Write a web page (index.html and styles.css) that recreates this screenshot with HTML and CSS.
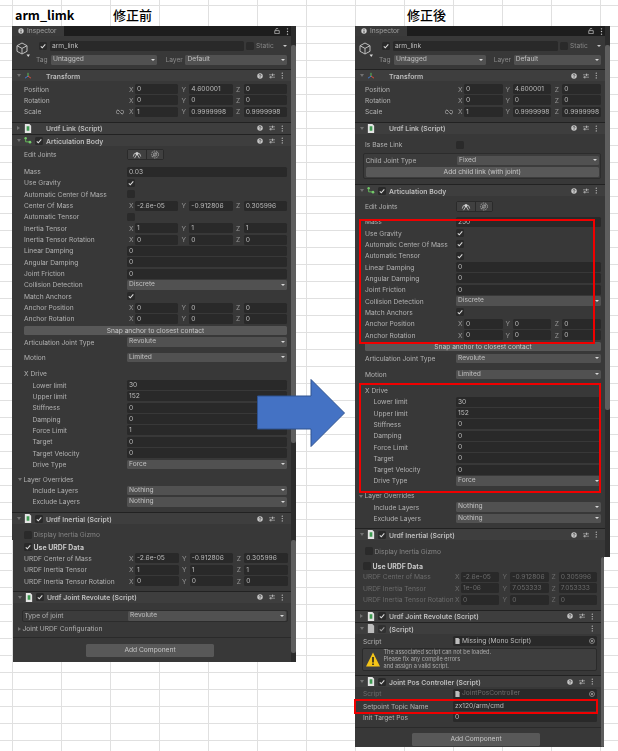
FILE: index.html
```html
<!DOCTYPE html>
<html lang="en">

<head>
    <meta charset="UTF-8">
    <meta name="viewport" content="width=device-width, initial-scale=1.0">
    <title>arm_link inspector</title>
    <link rel="stylesheet" href="styles.css">
</head>

<body>
    <svg class="defs" aria-hidden="true">
        <symbol id="i-help" viewBox="0 0 10 10"><circle cx="5" cy="5" r="4.6" fill="#c8c8c8"/><path d="M3.5 4c0-2 3-2 3 0 0 1-1.500 1-1.500 2.200M5 7.200v1" fill="none" stroke="#333" stroke-width="1.300"/></symbol>
        <symbol id="i-sliders" viewBox="0 0 10 10"><path d="M0 3h10M0 7h10" stroke="#bdbdbd"/><path d="M6 1v4M3 5v4" stroke="#bdbdbd" stroke-width="1.500"/></symbol>
        <symbol id="i-kebab" viewBox="0 0 4 10"><circle cx="2" cy="1.200" r="1" fill="#c8c8c8"/><circle cx="2" cy="5" r="1" fill="#c8c8c8"/><circle cx="2" cy="8.800" r="1" fill="#c8c8c8"/></symbol>
        <symbol id="i-check" viewBox="0 0 8 8"><path d="M1.800 4.300l1.500 1.500 3-3.400" fill="none" stroke="#dcdcdc" stroke-width="1.100"/></symbol>
        <symbol id="i-script" viewBox="0 0 8 10"><path d="M0.500 0h5l2 2v8h-7z" fill="#e4e4e4"/><path d="M2.500 2.500h3v5h-3z" fill="#3f9b52"/></symbol>
        <symbol id="i-doc" viewBox="0 0 8 10"><path d="M0.500 0h5l2 2v8h-7z" fill="#bdbdbd"/></symbol>
        <symbol id="i-transform" viewBox="0 0 12 10"><path d="M6 1v5" stroke="#5cc45a" stroke-width="1.400"/><path d="M6 6L1.500 9" stroke="#3f7fd8" stroke-width="1.400"/><path d="M6 6l4.500 3" stroke="#e0503c" stroke-width="1.400"/></symbol>
        <symbol id="i-joint" viewBox="0 0 12 11"><path d="M2.500 2v5.500h6" fill="none" stroke="#63b65a" stroke-width="1.500"/><circle cx="2.500" cy="2" r="1.800" fill="#74c96a"/><circle cx="9" cy="8" r="2" fill="#74c96a"/></symbol>
        <symbol id="i-cube" viewBox="0 0 14 15"><path d="M6 1l5 2.700v5.600L6 12 1 9.300V3.700zM1 3.700L6 6.400l5-2.700M6 6.400V12" fill="none" stroke="#bdbdbd"/><path d="M10.500 12.500h3.500l-1.750 2.500z" fill="#d8d8d8"/></symbol>
        <symbol id="i-lock" viewBox="0 0 8 8"><path d="M1 3.500h6v4H1zM2.500 3.500V1.500c0-1.300 3-1.300 3 0" fill="none" stroke="#bdbdbd"/></symbol>
        <symbol id="i-info" viewBox="0 0 8 8"><circle cx="4" cy="4" r="3.600" fill="#d0d0d0"/><path d="M4 3.400v3M4 1.600v1" stroke="#222" stroke-width="1.100"/></symbol>
        <symbol id="i-link" viewBox="0 0 10 7"><path d="M4 1.500H2.200a2 2 0 000 4H4M6 1.500h1.800a2 2 0 010 4H6M2 .5l6 6" fill="none" stroke="#a8a8a8" stroke-width=".9"/></symbol>
        <symbol id="i-edit-a" viewBox="0 0 12 11"><path d="M1.500 8a4.500 4.500 0 019 0" fill="none" stroke="#d0d0d0"/><circle cx="6" cy="4.500" r="1.800" fill="#d0d0d0"/><path d="M6 5L3 10M6 5l3 5" stroke="#d0d0d0"/></symbol>
        <symbol id="i-edit-b" viewBox="0 0 11 11"><circle cx="5.500" cy="5.500" r="4.300" fill="none" stroke="#aaa" stroke-dasharray="2 1"/><circle cx="5.500" cy="5.500" r="2" fill="none" stroke="#aaa"/><path d="M2.500 8.500l6-6" stroke="#aaa"/></symbol>
        <symbol id="i-target" viewBox="0 0 8 8"><circle cx="4" cy="4" r="3.300" fill="none" stroke="#a0a0a0"/><circle cx="4" cy="4" r="1.400" fill="#a0a0a0"/></symbol>
        <symbol id="i-warn" viewBox="0 0 14 15"><path d="M7 .5L14 14.500H0z" fill="#f5c518"/><path d="M7 5v5.500M7 11.500v1.500" stroke="#222" stroke-width="1.600"/></symbol>
    </svg>

    <header class="title-row">
        <span class="title">arm_limk</span>
        <span class="title-jp">修正前</span>
        <span class="title-jp">修正後</span>
    </header>
    <div class="sheet"></div>

    <!-- before -->
    <section class="window before">
        <div class="shot shot-a">
            <div class="content">
                <div class="tabs">
                    <div class="tab"><svg class="ic8"><use href="#i-info"/></svg>Inspector</div>
                    <svg class="ic8 lock"><use href="#i-lock"/></svg>
                    <svg class="kebab"><use href="#i-kebab"/></svg>
                </div>
                <div class="go">
                    <svg class="cube"><use href="#i-cube"/></svg>
                    <div class="go-col">
                        <div class="go-row">
                            <span class="check"><svg><use href="#i-check"/></svg></span>
                            <span class="field name">arm_link</span>
                            <span class="check empty"></span>
                            <span class="static">Static</span>
                            <span class="caret"></span>
                        </div>
                        <div class="go-row second">
                            <span class="tag-label">Tag</span>
                            <span class="select tag-sel">Untagged</span>
                            <span class="layer-label">Layer</span>
                            <span class="select layer-sel">Default</span>
                        </div>
                    </div>
                </div>

                <div class="head">
                    <span class="fold"></span><svg class="ic-head"><use href="#i-transform"/></svg><span class="no-check"></span>
                    <span class="head-title">Transform</span>
                    <span class="tools"><svg><use href="#i-help"/></svg><svg><use href="#i-sliders"/></svg><svg class="k"><use href="#i-kebab"/></svg></span>
                </div>
                <div class="row mt-2h"><span class="label">Position</span><div class="vec"><span class="axis">X</span><span class="field">0</span><span class="axis">Y</span><span class="field">4.600001</span><span class="axis">Z</span><span class="field">0</span></div></div>
                <div class="row"><span class="label">Rotation</span><div class="vec"><span class="axis">X</span><span class="field">0</span><span class="axis">Y</span><span class="field">0</span><span class="axis">Z</span><span class="field">0</span></div></div>
                <div class="row"><span class="label">Scale<svg class="link"><use href="#i-link"/></svg></span><div class="vec"><span class="axis">X</span><span class="field">1</span><span class="axis">Y</span><span class="field">0.9999998</span><span class="axis">Z</span><span class="field">0.9999998</span></div></div>

                <div class="head mt-4h">
                    <span class="fold closed"></span><svg class="ic-head"><use href="#i-script"/></svg><span class="no-check"></span>
                    <span class="head-title">Urdf Link (Script)</span>
                    <span class="tools"><svg><use href="#i-help"/></svg><svg><use href="#i-sliders"/></svg><svg class="k"><use href="#i-kebab"/></svg></span>
                </div>
                <div class="head mt-h">
                    <span class="fold"></span><svg class="ic-head"><use href="#i-joint"/></svg><span class="check"><svg><use href="#i-check"/></svg></span>
                    <span class="head-title">Articulation Body</span>
                    <span class="tools"><svg><use href="#i-help"/></svg><svg><use href="#i-sliders"/></svg><svg class="k"><use href="#i-kebab"/></svg></span>
                </div>
                <div class="row tall mt-2h"><span class="label">Edit Joints</span><span class="edit"><span><svg><use href="#i-edit-a"/></svg></span><span><svg><use href="#i-edit-b"/></svg></span></span></div>
                <div class="row mt-5"><span class="label">Mass</span><span class="field wide">0.03</span></div>
                <div class="row"><span class="label">Use Gravity</span><span class="check"><svg><use href="#i-check"/></svg></span></div>
                <div class="row"><span class="label">Automatic Center Of Mass</span><span class="check empty"></span></div>
                <div class="row"><span class="label">Center Of Mass</span><div class="vec"><span class="axis">X</span><span class="field">-2.6e-05</span><span class="axis">Y</span><span class="field">-0.912806</span><span class="axis">Z</span><span class="field">0.305996</span></div></div>
                <div class="row"><span class="label">Automatic Tensor</span><span class="check empty"></span></div>
                <div class="row"><span class="label">Inertia Tensor</span><div class="vec"><span class="axis">X</span><span class="field">1</span><span class="axis">Y</span><span class="field">1</span><span class="axis">Z</span><span class="field">1</span></div></div>
                <div class="row"><span class="label">Inertia Tensor Rotation</span><div class="vec"><span class="axis">X</span><span class="field">0</span><span class="axis">Y</span><span class="field">0</span><span class="axis">Z</span><span class="field">0</span></div></div>
                <div class="row"><span class="label">Linear Damping</span><span class="field wide">0</span></div>
                <div class="row"><span class="label">Angular Damping</span><span class="field wide">0</span></div>
                <div class="row"><span class="label">Joint Friction</span><span class="field wide">0</span></div>
                <div class="row"><span class="label">Collision Detection</span><span class="select wide">Discrete</span></div>
                <div class="row"><span class="label">Match Anchors</span><span class="check"><svg><use href="#i-check"/></svg></span></div>
                <div class="row"><span class="label">Anchor Position</span><div class="vec"><span class="axis">X</span><span class="field">0</span><span class="axis">Y</span><span class="field">0</span><span class="axis">Z</span><span class="field">0</span></div></div>
                <div class="row"><span class="label">Anchor Rotation</span><div class="vec"><span class="axis">X</span><span class="field">0</span><span class="axis">Y</span><span class="field">0</span><span class="axis">Z</span><span class="field">0</span></div></div>
                <div class="row mt-h"><span class="btn">Snap anchor to closest contact</span></div>
                <div class="row"><span class="label">Articulation Joint Type</span><span class="select wide">Revolute</span></div>
                <div class="row mt-4"><span class="label">Motion</span><span class="select wide">Limited</span></div>
                <div class="row mt-5"><span class="label">X Drive</span></div>
                <div class="row sub"><span class="label">Lower limit</span><span class="field wide">30</span></div>
                <div class="row sub"><span class="label">Upper limit</span><span class="field wide">152</span></div>
                <div class="row sub"><span class="label">Stiffness</span><span class="field wide">0</span></div>
                <div class="row sub"><span class="label">Damping</span><span class="field wide">0</span></div>
                <div class="row sub"><span class="label">Force Limit</span><span class="field wide">1</span></div>
                <div class="row sub"><span class="label">Target</span><span class="field wide">0</span></div>
                <div class="row sub"><span class="label">Target Velocity</span><span class="field wide">0</span></div>
                <div class="row sub"><span class="label">Drive Type</span><span class="select wide">Force</span></div>
                <div class="row mt-3h"><span class="label foldout"><span class="fold"></span>Layer Overrides</span></div>
                <div class="row sub"><span class="label">Include Layers</span><span class="select wide">Nothing</span></div>
                <div class="row sub"><span class="label">Exclude Layers</span><span class="select wide">Nothing</span></div>

                <div class="head mt-4h">
                    <span class="fold"></span><svg class="ic-head"><use href="#i-script"/></svg><span class="check"><svg><use href="#i-check"/></svg></span>
                    <span class="head-title">Urdf Inertial (Script)</span>
                    <span class="tools"><svg><use href="#i-help"/></svg><svg><use href="#i-sliders"/></svg><svg class="k"><use href="#i-kebab"/></svg></span>
                </div>
                <div class="row mt-5"><span class="check empty lead"></span><span class="toggle-text dim">Display Inertia Gizmo</span></div>
            </div>
            <div class="scrollbar"><span class="thumb"></span></div>
        </div>

        <div class="shot shot-b">
            <div class="content">
                <div class="row mt-1h"><span class="check lead"><svg><use href="#i-check"/></svg></span><span class="toggle-text strong">Use URDF Data</span></div>
                <div class="row"><span class="label">URDF Center of Mass</span><div class="vec"><span class="axis">X</span><span class="field">-2.6e-05</span><span class="axis">Y</span><span class="field">-0.912806</span><span class="axis">Z</span><span class="field">0.305996</span></div></div>
                <div class="row"><span class="label">URDF Inertia Tensor</span><div class="vec"><span class="axis">X</span><span class="field">1</span><span class="axis">Y</span><span class="field">1</span><span class="axis">Z</span><span class="field">1</span></div></div>
                <div class="row"><span class="label">URDF Inertia Tensor Rotation</span><div class="vec"><span class="axis">X</span><span class="field">0</span><span class="axis">Y</span><span class="field">0</span><span class="axis">Z</span><span class="field">0</span></div></div>
                <div class="head mt-4">
                    <span class="fold"></span><svg class="ic-head"><use href="#i-script"/></svg><span class="check"><svg><use href="#i-check"/></svg></span>
                    <span class="head-title">Urdf Joint Revolute (Script)</span>
                    <span class="tools"><svg><use href="#i-help"/></svg><svg><use href="#i-sliders"/></svg><svg class="k"><use href="#i-kebab"/></svg></span>
                </div>
                <div class="group mt-7">
                    <div class="row"><span class="label">Type of joint</span><span class="select wide">Revolute</span></div>
                </div>
                <div class="row mt-1h"><span class="label foldout"><span class="fold closed"></span>Joint URDF Configuration</span></div>
                <div class="sep mt-2h"></div>
                <div class="add mt-6"><span class="add-btn">Add Component</span></div>
            </div>
            <div class="scrollbar"><span class="thumb"></span></div>
        </div>
    </section>

    <!-- after -->
    <section class="window after">
        <div class="shot shot-a">
            <div class="content">
                <div class="tabs">
                    <div class="tab"><svg class="ic8"><use href="#i-info"/></svg>Inspector</div>
                    <svg class="ic8 lock"><use href="#i-lock"/></svg>
                    <svg class="kebab"><use href="#i-kebab"/></svg>
                </div>
                <div class="go">
                    <svg class="cube"><use href="#i-cube"/></svg>
                    <div class="go-col">
                        <div class="go-row">
                            <span class="check"><svg><use href="#i-check"/></svg></span>
                            <span class="field name">arm_link</span>
                            <span class="check empty"></span>
                            <span class="static">Static</span>
                            <span class="caret"></span>
                        </div>
                        <div class="go-row second">
                            <span class="tag-label">Tag</span>
                            <span class="select tag-sel">Untagged</span>
                            <span class="layer-label">Layer</span>
                            <span class="select layer-sel">Default</span>
                        </div>
                    </div>
                </div>

                <div class="head">
                    <span class="fold"></span><svg class="ic-head"><use href="#i-transform"/></svg><span class="no-check"></span>
                    <span class="head-title">Transform</span>
                    <span class="tools"><svg><use href="#i-help"/></svg><svg><use href="#i-sliders"/></svg><svg class="k"><use href="#i-kebab"/></svg></span>
                </div>
                <div class="row mt-2h"><span class="label">Position</span><div class="vec"><span class="axis">X</span><span class="field">0</span><span class="axis">Y</span><span class="field">4.600001</span><span class="axis">Z</span><span class="field">0</span></div></div>
                <div class="row"><span class="label">Rotation</span><div class="vec"><span class="axis">X</span><span class="field">0</span><span class="axis">Y</span><span class="field">0</span><span class="axis">Z</span><span class="field">0</span></div></div>
                <div class="row"><span class="label">Scale<svg class="link"><use href="#i-link"/></svg></span><div class="vec"><span class="axis">X</span><span class="field">1</span><span class="axis">Y</span><span class="field">0.9999998</span><span class="axis">Z</span><span class="field">0.9999998</span></div></div>

                <div class="head mt-4h">
                    <span class="fold"></span><svg class="ic-head"><use href="#i-script"/></svg><span class="no-check"></span>
                    <span class="head-title">Urdf Link (Script)</span>
                    <span class="tools"><svg><use href="#i-help"/></svg><svg><use href="#i-sliders"/></svg><svg class="k"><use href="#i-kebab"/></svg></span>
                </div>
                <div class="row mt-5"><span class="label">Is Base Link</span><span class="check empty"></span></div>
                <div class="group link-group mt-3">
                    <div class="row"><span class="label">Child Joint Type</span><span class="select wide">Fixed</span></div>
                    <div class="row"><span class="btn">Add child link (with joint)</span></div>
                </div>
                <div class="head mt-5h">
                    <span class="fold"></span><svg class="ic-head"><use href="#i-joint"/></svg><span class="check"><svg><use href="#i-check"/></svg></span>
                    <span class="head-title">Articulation Body</span>
                    <span class="tools"><svg><use href="#i-help"/></svg><svg><use href="#i-sliders"/></svg><svg class="k"><use href="#i-kebab"/></svg></span>
                </div>
                <div class="row tall mt-4"><span class="label">Edit Joints</span><span class="edit"><span><svg><use href="#i-edit-a"/></svg></span><span><svg><use href="#i-edit-b"/></svg></span></span></div>
                <div class="row mt-4"><span class="label">Mass</span><span class="field wide">250</span></div>
                <div class="row"><span class="label">Use Gravity</span><span class="check"><svg><use href="#i-check"/></svg></span></div>
                <div class="row"><span class="label">Automatic Center Of Mass</span><span class="check"><svg><use href="#i-check"/></svg></span></div>
                <div class="row"><span class="label">Automatic Tensor</span><span class="check"><svg><use href="#i-check"/></svg></span></div>
                <div class="row"><span class="label">Linear Damping</span><span class="field wide">0</span></div>
                <div class="row"><span class="label">Angular Damping</span><span class="field wide">0</span></div>
                <div class="row"><span class="label">Joint Friction</span><span class="field wide">0</span></div>
                <div class="row"><span class="label">Collision Detection</span><span class="select wide">Discrete</span></div>
                <div class="row"><span class="label">Match Anchors</span><span class="check"><svg><use href="#i-check"/></svg></span></div>
                <div class="row"><span class="label">Anchor Position</span><div class="vec"><span class="axis">X</span><span class="field">0</span><span class="axis">Y</span><span class="field">0</span><span class="axis">Z</span><span class="field">0</span></div></div>
                <div class="row"><span class="label">Anchor Rotation</span><div class="vec"><span class="axis">X</span><span class="field">0</span><span class="axis">Y</span><span class="field">0</span><span class="axis">Z</span><span class="field">0</span></div></div>
                <div class="row"><span class="btn">Snap anchor to closest contact</span></div>
                <div class="row mt-1"><span class="label">Articulation Joint Type</span><span class="select wide">Revolute</span></div>
                <div class="row mt-4h"><span class="label">Motion</span><span class="select wide">Limited</span></div>
                <div class="row mt-4h"><span class="label">X Drive</span></div>
                <div class="row sub"><span class="label">Lower limit</span><span class="field wide">30</span></div>
                <div class="row sub"><span class="label">Upper limit</span><span class="field wide">152</span></div>
                <div class="row sub"><span class="label">Stiffness</span><span class="field wide">0</span></div>
                <div class="row sub"><span class="label">Damping</span><span class="field wide">0</span></div>
                <div class="row sub"><span class="label">Force Limit</span><span class="field wide">0</span></div>
                <div class="row sub"><span class="label">Target</span><span class="field wide">0</span></div>
                <div class="row sub"><span class="label">Target Velocity</span><span class="field wide">0</span></div>
                <div class="row sub"><span class="label">Drive Type</span><span class="select wide">Force</span></div>
                <div class="row mt-3h"><span class="label foldout"><span class="fold"></span>Layer Overrides</span></div>
                <div class="row sub"><span class="label">Include Layers</span><span class="select wide">Nothing</span></div>
                <div class="row sub"><span class="label">Exclude Layers</span><span class="select wide">Nothing</span></div>

                <div class="head mt-4">
                    <span class="fold"></span><svg class="ic-head"><use href="#i-script"/></svg><span class="check"><svg><use href="#i-check"/></svg></span>
                    <span class="head-title">Urdf Inertial (Script)</span>
                    <span class="tools"><svg><use href="#i-help"/></svg><svg><use href="#i-sliders"/></svg><svg class="k"><use href="#i-kebab"/></svg></span>
                </div>
                <div class="row mt-5h"><span class="check empty lead"></span><span class="toggle-text dim">Display Inertia Gizmo</span></div>
            </div>
            <div class="scrollbar"><span class="thumb"></span></div>
        </div>

        <div class="shot shot-b">
            <div class="content">
                <div class="row mt-3"><span class="check empty lead"></span><span class="toggle-text strong">Use URDF Data</span></div>
                <div class="row off"><span class="label">URDF Center of Mass</span><div class="vec"><span class="axis">X</span><span class="field">-2.6e-05</span><span class="axis">Y</span><span class="field">-0.912806</span><span class="axis">Z</span><span class="field">0.305996</span></div></div>
                <div class="row off"><span class="label">URDF Inertia Tensor</span><div class="vec"><span class="axis">X</span><span class="field">1e-06</span><span class="axis">Y</span><span class="field">7.053333</span><span class="axis">Z</span><span class="field">7.053333</span></div></div>
                <div class="row off"><span class="label">URDF Inertia Tensor Rotation</span><div class="vec"><span class="axis">X</span><span class="field">0</span><span class="axis">Y</span><span class="field">0</span><span class="axis">Z</span><span class="field">0</span></div></div>
                <div class="head mt-4h">
                    <span class="fold closed"></span><svg class="ic-head"><use href="#i-script"/></svg><span class="check"><svg><use href="#i-check"/></svg></span>
                    <span class="head-title">Urdf Joint Revolute (Script)</span>
                    <span class="tools"><svg><use href="#i-help"/></svg><svg><use href="#i-sliders"/></svg><svg class="k"><use href="#i-kebab"/></svg></span>
                </div>
                <div class="head mt-h">
                    <span class="fold"></span><svg class="ic-head"><use href="#i-doc"/></svg><span class="check faded"><svg><use href="#i-check"/></svg></span>
                    <span class="head-title">(Script)</span>
                    <span class="tools"><svg class="k"><use href="#i-kebab"/></svg></span>
                </div>
                <div class="row mt-1h"><span class="label">Script</span><span class="field wide objfield"><svg><use href="#i-doc"/></svg>Missing (Mono Script)<svg class="target"><use href="#i-target"/></svg></span></div>
                <div class="warn mt-h">
                    <svg><use href="#i-warn"/></svg>
                    <p>The associated script can not be loaded.<br>Please fix any compile errors<br>and assign a valid script.</p>
                </div>
                <div class="head mt-4h">
                    <span class="fold"></span><svg class="ic-head"><use href="#i-script"/></svg><span class="check"><svg><use href="#i-check"/></svg></span>
                    <span class="head-title">Joint Pos Controller (Script)</span>
                    <span class="tools"><svg><use href="#i-help"/></svg><svg><use href="#i-sliders"/></svg><svg class="k"><use href="#i-kebab"/></svg></span>
                </div>
                <div class="row off mt-1"><span class="label">Script</span><span class="field wide objfield"><svg><use href="#i-doc"/></svg>JointPosController<svg class="target"><use href="#i-target"/></svg></span></div>
                <div class="row mt-1"><span class="label">Setpoint Topic Name</span><span class="field wide">zx120/arm/cmd</span></div>
                <div class="row"><span class="label">Init Target Pos</span><span class="field wide">0</span></div>
                <div class="sep mt-4"></div>
                <div class="add mt-5"><span class="add-btn">Add Component</span></div>
            </div>
            <div class="scrollbar"><span class="thumb"></span></div>
        </div>
    </section>

    <svg class="arrow" viewBox="0 0 88 68" aria-hidden="true">
        <polygon points="0.500,17 54,17 54,0.500 87.500,34 54,67.500 54,50 0.500,50" fill="#4472c4" stroke="#2f528f"/>
    </svg>
    <div class="mark mark-a"></div>
    <div class="mark mark-b"></div>
    <div class="mark mark-c"></div>
</body>

</html>
```

FILE: styles.css
```css
html,
body {
    padding: 0;
    margin: 0;
}

* {
    box-sizing: border-box;
}

body {
    position: relative;
    width: 618px;
    height: 751px;
    overflow: hidden;
    background-color: white;
    font-family: Inter, "Liberation Sans", sans-serif;
}

.defs {
    position: absolute;
    width: 0;
    height: 0;
}

/* spreadsheet behind the windows */
.title-row {
    display: grid;
    grid-template-columns: 98px 294px auto;
    align-items: center;
    height: 26px;
    padding: 4px 0 1px 15px;
    color: black;
    background:
        linear-gradient(#e0e0e0, #e0e0e0) 0 5px / 100% 1px no-repeat,
        linear-gradient(90deg, #e0e0e0 1px, transparent 1px) 12px 0 / 49px 100%;
}

.title {
    font-family: "Noto Sans CJK JP", sans-serif;
    font-size: 12.5px;
    font-weight: 700;
}

.title-jp {
    font-family: "Noto Sans CJK JP", sans-serif;
    font-size: 13px;
    font-weight: 500;
}

.sheet {
    height: 725px;
    background:
        linear-gradient(#e0e0e0 1px, transparent 1px) 0 0 / 100% 17px,
        linear-gradient(90deg, #e0e0e0 1px, transparent 1px) 12px 0 / 49px 100%;
}

/* inspector windows */
.window {
    position: absolute;
    top: 26px;
    display: flex;
    flex-direction: column;
    align-items: flex-start;
    color: #b2b2b2;
    font-size: 6.65px;
    filter: blur(0.4px);
}

.before {
    left: 12px;
    --label: 103px;
    --pad-l: 12px;
    --pad-r: 4px;
    --cols: 8px 1fr 11px 1fr 11px 1fr;
}

.before .shot-a {
    width: 284px;
    height: 514px;
}

.before .shot-b {
    width: 283px;
    height: 122px;
    margin-left: 1px;
    --pad-l: 11px;
    --pad-r: 3px;
}

.after {
    left: 355px;
    --label: 91px;
    --pad-l: 10px;
    --pad-r: 4px;
    --cols: 8px 1fr 10px 1fr 11px 1fr;
}

.after .shot-a {
    width: 255px;
    height: 531px;
}

.after .shot-b {
    width: 249px;
    height: 190px;
    --pad-l: 8px;
    --label: 90px;
    --pad-r: 4px;
    --cols: 8px 1fr 11px 1fr 10px 1fr;
}

.shot {
    display: flex;
    overflow: hidden;
    background-color: #383838;
}

.content {
    flex: 1;
    min-width: 0;
}

.scrollbar {
    flex: none;
    width: 5px;
    background-color: #2c2c2c;
    padding-top: 19px;
}

.thumb {
    display: block;
    width: 100%;
    background-color: #5e5e5e;
    border-radius: 2px;
}

.before .shot-a .thumb {
    height: 398px;
}

.after .shot-a .thumb {
    height: 365px;
}

.shot-b .scrollbar {
    padding-top: 0;
}

.before .shot-b .thumb {
    height: 113px;
}

.after .shot-b .scrollbar {
    width: 3px;
}

.after .shot-b .thumb {
    height: 190px;
}

.tabs {
    display: flex;
    align-items: center;
    height: 10px;
    background-color: #1d1d1d;
    padding-right: 2px;
}

.tab {
    display: flex;
    align-items: center;
    gap: 3px;
    width: 52px;
    height: 100%;
    padding-left: 6px;
    background-color: #3a3a3a;
    color: #a0a0a0;
}

.ic8 {
    width: 6px;
    height: 6px;
}

.lock {
    margin-left: auto;
}

.kebab {
    width: 3px;
    height: 7px;
    margin-left: 6px;
}

.go {
    display: flex;
    height: 33px;
    padding: 5px var(--pad-r) 0 4px;
}

.cube {
    flex: none;
    width: 14px;
    height: 15px;
    margin-top: 1px;
}

.go-col {
    flex: 1;
    min-width: 0;
    padding-left: 9px;
}

.go-row {
    display: flex;
    align-items: center;
    height: 10px;
}

.second {
    margin-top: 4px;
}

.name {
    flex: 1;
    margin: 0 2px 0 3px;
    padding-left: 2px;
}

.static {
    width: 29px;
    padding-left: 2px;
    color: #858585;
}

.caret {
    position: relative;
    width: 4px;
}

.caret::after {
    content: "";
    position: absolute;
    top: -1px;
    right: 0;
    border: 2.2px solid transparent;
    border-top: 2.8px solid #c8c8c8;
    border-bottom: 0;
}

.tag-label {
    width: 15px;
    color: #8a8a8a;
}

.second .tag-label {
    margin-left: -3px;
}

.layer-label {
    width: 20px;
    margin-left: 8px;
    color: #8a8a8a;
}

.tag-sel {
    flex: 1.05;
}

.layer-sel {
    flex: 1;
}

/* component headers */
.head {
    display: flex;
    align-items: center;
    height: 12px;
    padding-left: 5px;
    border-top: 1px solid #222;
    background-color: #3e3e3e;
    color: #bebebe;
    font-size: 6.85px;
    font-weight: 600;
}

.fold {
    flex: none;
    width: 0;
    height: 0;
    border-style: solid;
    border-width: 3.2px 2.2px 0 2.2px;
    border-color: #727272 transparent transparent;
    margin-right: 3px;
}

.fold.closed {
    border-width: 2.2px 0 2.2px 3.2px;
    border-color: transparent transparent transparent #727272;
    margin-right: 4px;
}

.ic-head {
    flex: none;
    width: 8px;
    height: 9px;
}

.no-check {
    width: 14px;
}

.head .check {
    margin: 0 3px;
}

.head-title {
    padding-top: 1px;
    white-space: nowrap;
}

.tools {
    display: flex;
    align-items: center;
    gap: 6px;
    margin-left: auto;
    padding-right: 8px;
}

.tools svg {
    width: 6px;
    height: 6px;
}

.tools .k {
    width: 2.5px;
    height: 7px;
}

/* rows */
.row {
    display: flex;
    align-items: center;
    height: 11.34px;
    padding: 0 var(--pad-r) 0 var(--pad-l);
}

.row.tall {
    height: 12px;
}

.label {
    display: flex;
    flex: none;
    align-items: center;
    justify-content: space-between;
    width: var(--label);
    padding: 1px 1px 0 0;
    overflow: hidden;
    white-space: nowrap;
}

.sub .label {
    padding-left: 8.5px;
}

.foldout {
    justify-content: flex-start;
    margin-left: -6px;
    width: calc(var(--label) + 6px);
}

.foldout .fold {
    margin-right: 1.5px;
}

.link {
    width: 8px;
    height: 6px;
    margin-right: 2px;
}

.vec {
    display: grid;
    flex: 1;
    grid-template-columns: var(--cols);
    align-items: center;
    min-width: 0;
}

.axis {
    padding-top: 1px;
    text-align: center;
    color: #969696;
}

.vec .axis:first-child {
    text-align: left;
    padding-left: 2px;
}

.field {
    display: block;
    height: 10px;
    padding-left: 2px;
    overflow: hidden;
    border-radius: 1.5px;
    background-color: #292929;
    color: #bcbcbc;
    line-height: 11px;
    white-space: nowrap;
}

.wide {
    flex: 1;
    min-width: 0;
}

.select {
    position: relative;
    display: block;
    height: 9.5px;
    padding-left: 2px;
    border-radius: 1.5px;
    background-color: #515151;
    color: #c0c0c0;
    line-height: 9px;
    white-space: nowrap;
}

.select::after {
    content: "";
    position: absolute;
    top: 3.5px;
    right: 2.5px;
    border: 2px solid transparent;
    border-top: 2.5px solid #d8d8d8;
    border-bottom: 0;
}

.check {
    display: block;
    flex: none;
    width: 8px;
    height: 8px;
    border-radius: 1.5px;
    background-color: #2a2a2a;
}

.check svg {
    display: block;
    width: 8px;
    height: 8px;
}

.check.faded {
    opacity: 0.6;
}

.lead {
    margin-right: 1.5px;
}

.toggle-text {
    padding-top: 1px;
    white-space: nowrap;
}

.dim {
    color: #858585;
}

.strong {
    color: #c8c8c8;
    font-size: 6.9px;
    font-weight: 700;
}

.off .label,
.off .axis,
.off .field {
    color: #6c6c6c;
}

.btn {
    display: block;
    flex: 1;
    height: 9.5px;
    border-radius: 1.5px;
    background-color: #585858;
    color: #c8c8c8;
    line-height: 10px;
    text-align: center;
}

.edit {
    display: flex;
    height: 11px;
    border: 1px solid #2a2a2a;
    border-radius: 2px;
}

.edit span {
    display: flex;
    align-items: center;
    justify-content: center;
    width: 17.5px;
    background-color: #404040;
}

.edit span + span {
    border-left: 1px solid #2a2a2a;
}

.edit svg {
    width: 10px;
    height: 9px;
}

.group {
    margin: 0 var(--pad-r) 0 calc(var(--pad-l) - 2.5px);
    height: 12px;
    border: 1px solid #2c2c2c;
    border-radius: 2px;
    background-color: #3c3c3c;
}

.group .row {
    height: 10px;
    padding: 0 1px 0 2px;
}

.group .label {
    width: calc(var(--label) + 0.5px);
}

.link-group {
    height: 25.3px;
    padding: 0.5px 0;
}

.link-group .row {
    height: 11.34px;
}

.sep {
    border-top: 1px solid #2a2a2a;
}

.add {
    display: flex;
    justify-content: center;
}

.add-btn {
    display: block;
    width: 128px;
    height: 13px;
    margin-left: -4px;
    border-radius: 1.5px;
    background-color: #585858;
    color: #c8c8c8;
    line-height: 13px;
    text-align: center;
}

.objfield {
    display: flex;
    align-items: center;
    gap: 2px;
}

.objfield svg {
    flex: none;
    width: 5px;
    height: 6px;
}

.objfield .target {
    width: 6px;
    height: 6px;
    margin: 0 2px 0 auto;
}

.warn {
    display: flex;
    align-items: center;
    gap: 4px;
    height: 23px;
    margin: 0 var(--pad-r) 0 6.5px;
    padding-left: 3px;
    border: 1px solid #2a2a2a;
    border-radius: 2px;
    background-color: #3e3e3e;
}

.warn svg {
    flex: none;
    width: 14px;
    height: 15px;
}

.warn p {
    margin: 0;
    font-size: 5.6px;
    line-height: 6.8px;
    color: #ababab;
}

.mt-h { margin-top: 0.5px; }
.mt-1 { margin-top: 1px; }
.mt-1h { margin-top: 1.5px; }
.mt-2h { margin-top: 2.5px; }
.mt-3 { margin-top: 3px; }
.mt-3h { margin-top: 3.5px; }
.mt-4 { margin-top: 4px; }
.mt-4h { margin-top: 4.5px; }
.mt-5 { margin-top: 5px; }
.mt-5h { margin-top: 5.5px; }
.mt-6 { margin-top: 6px; }
.mt-7 { margin-top: 7px; }

/* drawn on top of the sheet */
.arrow {
    position: absolute;
    left: 257px;
    top: 379px;
    width: 88px;
    height: 68px;
}

.mark {
    position: absolute;
    border: 2px solid #f00000;
}

.mark-a {
    left: 359px;
    top: 219px;
    width: 236px;
    height: 125px;
}

.mark-b {
    left: 359px;
    top: 383px;
    width: 242px;
    height: 110px;
}

.mark-c {
    left: 354px;
    top: 699px;
    width: 244px;
    height: 15px;
}
```
